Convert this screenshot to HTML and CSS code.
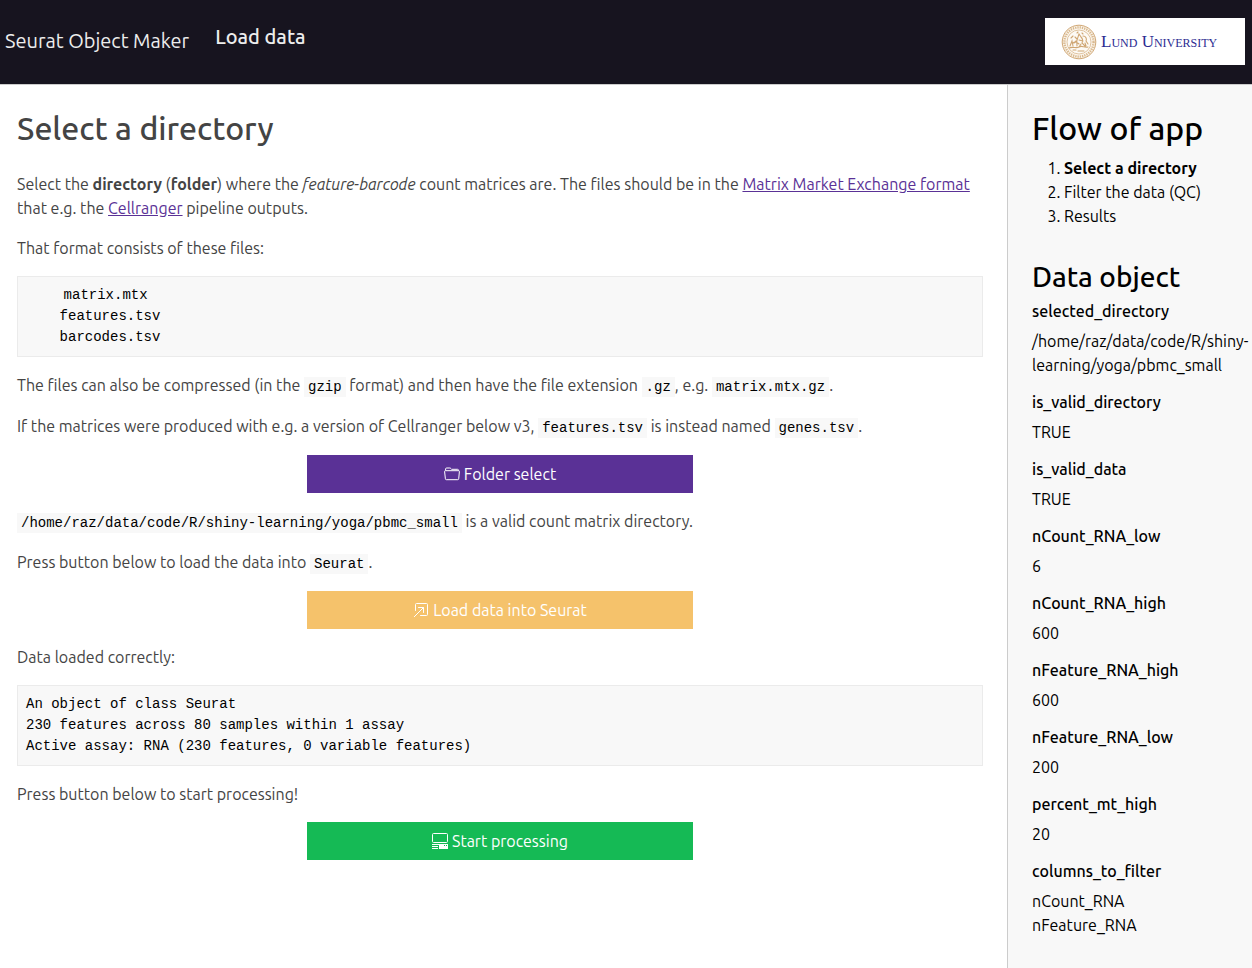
FILE: index.html
```html
<!DOCTYPE html>
<html lang="en">
<head>
<meta charset="utf-8">
<meta name="viewport" content="width=device-width, initial-scale=1">
<title>Seurat Object Maker</title>
<link rel="stylesheet" href="styles.css">
</head>
<body>
<header class="topbar">
  <span class="brand">Seurat Object Maker</span>
  <nav class="nav"><a class="nav-link" href="#load">Load data</a></nav>
  <div class="logo">
    <svg class="seal" viewBox="0 0 36 36" aria-hidden="true">
      <circle cx="18" cy="18" r="16.8" fill="#fbf5ec" stroke="#cfa673" stroke-width="1"/>
      <circle cx="18" cy="18" r="14.6" fill="none" stroke="#d8b88e" stroke-width="2.4" stroke-dasharray="1.3 1"/>
      <circle cx="18" cy="18" r="12" fill="#fdfaf5" stroke="#d8b88e" stroke-width=".8"/>
      <g fill="none" stroke="#cfa673" stroke-width="1.1" stroke-linecap="round">
        <path d="M9 22l2-5 1 5M10 14l2-2M16 22c-1-4 0-7 1-9l1-3 2 3c2 2 2 4 1 6l3 3M14 13l2 2M22 12c3 0 4 3 3 5l2 3M12 19c2-2 4-1 6 1M18 16l4 1M8 24c4-2 7 1 10-1s5 1 9 0M12 26h3M17 27h6M24 19l1 3M15 17l-2 2M20 20l-2 3M16 9l1-1M21 9l1 1"/>
      </g>
    </svg>
    <span class="logo-text">Lund University</span>
  </div>
</header>
<div class="layout">
  <main class="content" id="load">
    <h1 class="title">Select a directory</h1>
    <p class="text">Select the <strong>directory</strong> (<strong>folder</strong>) where the <em>feature-barcode</em> count matrices are. The files should be in the <a class="link" href="#format">Matrix Market Exchange format</a> that e.g. the <a class="link" href="#cellranger">Cellranger</a> pipeline outputs.</p>
    <p class="text">That format consists of these files:</p>
    <pre class="block"><code class="code">    matrix.mtx
    features.tsv
    barcodes.tsv</code></pre>
    <p class="text">The files can also be compressed (in the <code class="code">gzip</code> format) and then have the file extension <code class="code">.gz</code>, e.g. <code class="code">matrix.mtx.gz</code>.</p>
    <p class="text">If the matrices were produced with e.g. a version of Cellranger below v3, <code class="code">features.tsv</code> is instead named <code class="code">genes.tsv</code>.</p>
    <button class="btn btn-folder" type="button">
      <svg class="icon" viewBox="0 0 16 16" aria-hidden="true"><path d="M1.6 4.5V3q0-1 1-1h3.2q.7 0 1.2.7l.5.6h6q1 0 1 1v.4M1.3 4.7h13.4q.8 0 .7.9l-.7 7.2q-.1.9-1 .9H2.4q-.9 0-1-.9L.6 5.6q-.1-.9.7-.9Z" fill="none" stroke="currentColor"/></svg>
      Folder select
    </button>
    <p class="text"><code class="code">/home/raz/data/code/R/shiny-learning/yoga/pbmc_small</code> is a valid count matrix directory.</p>
    <p class="text">Press button below to load the data into <code class="code">Seurat</code>.</p>
    <button class="btn btn-load" type="button">
      <svg class="icon" viewBox="0 0 16 16" aria-hidden="true"><path d="M2.500 8.500V2.500q0-1 1-1h10q1 0 1 1v10q0 1-1 1H7.500M1.300 14.700l9.200-9.200M5.500 5.500h5v5" fill="none" stroke="currentColor" stroke-linecap="round" stroke-linejoin="round"/></svg>
      Load data into Seurat
    </button>
    <p class="text">Data loaded correctly:</p>
    <pre class="block">An object of class Seurat 
230 features across 80 samples within 1 assay 
Active assay: RNA (230 features, 0 variable features)</pre>
    <p class="text">Press button below to start processing!</p>
    <button class="btn btn-start" type="button">
      <svg class="icon" viewBox="0 0 16 16" aria-hidden="true"><rect x=".5" y=".5" width="15" height="9" rx="1" fill="none" stroke="currentColor"/><path fill="currentColor" fill-rule="evenodd" d="M0 11h16v5H7v-4H0ZM12 12v1h1v-1ZM14 12v1h1v-1ZM0 13h6v1H0ZM0 15h6v1H0Z"/></svg>
      Start processing
    </button>
  </main>
  <aside class="sidebar">
    <h2 class="side-title">Flow of app</h2>
    <ol class="steps">
      <li><strong>Select a directory</strong></li>
      <li>Filter the data (QC)</li>
      <li>Results</li>
    </ol>
    <h3 class="side-subtitle">Data object</h3>
    <dl class="data">
      <dt>selected_directory</dt><dd>/home/raz/data/code/R/shiny-<wbr>learning/yoga/pbmc_small</dd>
      <dt>is_valid_directory</dt><dd>TRUE</dd>
      <dt>is_valid_data</dt><dd>TRUE</dd>
      <dt>nCount_RNA_low</dt><dd>6</dd>
      <dt>nCount_RNA_high</dt><dd>600</dd>
      <dt>nFeature_RNA_high</dt><dd>600</dd>
      <dt>nFeature_RNA_low</dt><dd>200</dd>
      <dt>percent_mt_high</dt><dd>20</dd>
      <dt>columns_to_filter</dt><dd>nCount_RNA<br>nFeature_RNA</dd>
    </dl>
  </aside>
</div>
</body>
</html>
```
FILE: styles.css
```css
* { box-sizing: border-box; }

body {
  margin: 0;
  min-height: 100vh;
  display: flex;
  flex-direction: column;
  background: #fff;
  color: #444;
  font: 16px/24px Ubuntu, "Noto Sans", sans-serif;
}

h1, h2, h3, p, pre, ol, dl, dd { margin: 0; }

.topbar {
  display: flex;
  align-items: flex-start;
  gap: 26px;
  min-height: 85px;
  padding: 18px 7px 18px 5px;
  border-bottom: 1px solid #ccc;
  background: #17141f;
  color: #ededed;
  font-size: 20px;
}
.brand { padding-top: 11px; }
.nav { flex: 1; padding-top: 7px; }
.nav-link { color: inherit; font-weight: 500; text-decoration: none; }

.logo {
  display: flex;
  align-items: center;
  gap: 4px;
  width: 200px;
  height: 47px;
  padding-left: 16px;
  background: #fff;
}
.seal { width: 36px; height: 36px; }
.logo-text {
  color: #2b2b91;
  font-family: "Liberation Serif", serif;
  font-size: 17px;
  font-variant: small-caps;
  white-space: nowrap;
}

.layout {
  flex: 1;
  display: grid;
  grid-template-columns: minmax(0, 1fr) 245px;
}

.content {
  display: flex;
  flex-direction: column;
  gap: 16px;
  padding: 24px 24px 24px 17px;
}
.title {
  padding-bottom: 8px;
  font-size: 32px;
  font-weight: 500;
  line-height: 39px;
}
.link { color: #5a3196; }

.block {
  padding: 8px;
  border: 1px solid #ebebeb;
  background: #f8f8f8;
  color: #000;
  font: 14px/21px "Liberation Mono", monospace;
}
.code {
  padding: 2px 4px;
  background: #f8f8f8;
  color: #000;
  font: 14px/21px "Liberation Mono", monospace;
}

.btn {
  display: flex;
  align-items: center;
  justify-content: center;
  gap: 4px;
  align-self: center;
  width: 40%;
  padding: 7px 12px;
  border: 0;
  color: #fff;
  font: inherit;
  cursor: pointer;
}
.btn-folder { background: #5a3196; }
.btn-load { background: #f5c26b; }
.btn-start { background: #15ba55; }
.icon { width: 16px; height: 16px; }

.sidebar {
  padding: 24px 0 24px 24px;
  border-left: 1px solid #ccc;
  background: #f8f8f8;
  color: #000;
}
.side-title { font-size: 32px; font-weight: 500; line-height: 39px; }
.side-subtitle { margin-bottom: 7px; font-size: 28px; font-weight: 500; line-height: 34px; }
.steps { margin: 8px 0 32px; padding-left: 32px; }
.data dt { margin-bottom: 8px; font-weight: 500; line-height: 20px; }
.data dd { margin-bottom: 15px; }
```
